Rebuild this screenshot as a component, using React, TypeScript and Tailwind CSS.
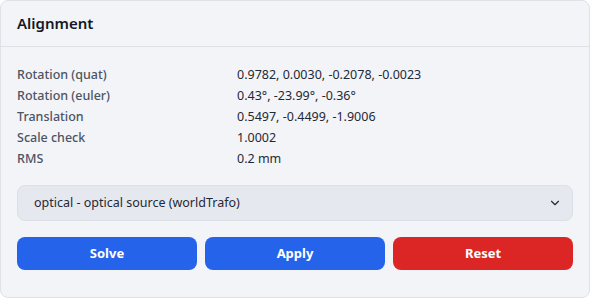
import React from 'react';
import { ChevronDown } from 'lucide-react';

const rows = [
  { label: 'Rotation (quat)', value: '0.9782, 0.0030, -0.2078, -0.0023' },
  { label: 'Rotation (euler)', value: '0.43°, -23.99°, -0.36°' },
  { label: 'Translation', value: '0.5497, -0.4499, -1.9006' },
  { label: 'Scale check', value: '1.0002' },
  { label: 'RMS', value: '0.2 mm' },
];

const App: React.FC = () => {
  return (
    <div className="w-[590px] h-[300px] bg-white font-['Noto_Sans',sans-serif]">
      <div className="h-[298px] bg-[#f3f4f8] border border-[#dfe1e6] rounded-lg flex flex-col">
        {/* Header */}
        <div className="h-[46px] px-4 flex items-center border-b border-[#dfe1e6]">
          <h2 className="text-[15px] font-semibold text-[#111827]">Alignment</h2>
        </div>

        {/* Body */}
        <div className="px-4 pt-[17px] flex flex-col">
          <div className="grid grid-cols-[220px_1fr]">
            {rows.map((row) => (
              <React.Fragment key={row.label}>
                <div className="text-[12.5px] leading-[21px] font-medium text-[#4b5563]">{row.label}</div>
                <div className="text-[12.5px] leading-[21px] text-[#1f2937]">{row.value}</div>
              </React.Fragment>
            ))}
          </div>

          <div className="mt-4 h-9 rounded-lg border border-[#dcdfe6] bg-[#e6e8ef] flex items-center justify-between pl-4 pr-2.5">
            <span className="text-[12.5px] text-[#1f2937]">optical - optical source (worldTrafo)</span>
            <ChevronDown size={14} strokeWidth={2} className="text-[#1f2937]" />
          </div>

          <div className="mt-4 grid grid-cols-3 gap-2">
            <button className="h-[33px] rounded-lg bg-[#2563eb] text-white text-[13px] font-bold">Solve</button>
            <button className="h-[33px] rounded-lg bg-[#2563eb] text-white text-[13px] font-bold">Apply</button>
            <button className="h-[33px] rounded-lg bg-[#dc2626] text-white text-[13px] font-bold">Reset</button>
          </div>
        </div>
      </div>
    </div>
  );
};

export default App;
